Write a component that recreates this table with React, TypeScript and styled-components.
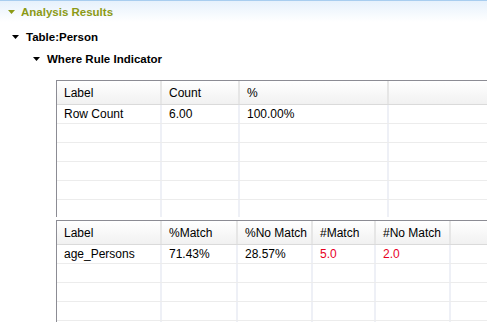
import React from "react";
import styled, { createGlobalStyle } from "styled-components";

const Global = createGlobalStyle`
  html, body { margin: 0; padding: 0; background: #fff; }
  body { font-family: "Liberation Sans", Arial, sans-serif; font-size: 12px; color: #000; overflow: hidden; }
`;

const Page = styled.div`
  width: 487px;
  height: 322px;
  overflow: hidden;
  display: flex;
  flex-direction: column;
  & > * { flex-shrink: 0; }
`;

const SectionBar = styled.div`
  height: 22px;
  border-top: 1px solid #a8cdef;
  box-sizing: border-box;
  background: linear-gradient(#e6f1fc, #ffffff);
  display: flex;
  align-items: center;
  padding-left: 8px;
  gap: 6px;
  color: #8b9a16;
  font-weight: bold;
  font-size: 11.5px;
`;

const TreeRow = styled.div<{ $indent: number; $top?: number }>`
  height: 22px;
  margin-top: ${(p) => p.$top ?? 0}px;
  display: flex;
  align-items: center;
  padding-left: ${(p) => p.$indent}px;
  gap: 7px;
  font-weight: bold;
  font-size: 11.5px;
`;

const Arrow = ({ color }: { color: string }) => (
  <svg width="7" height="4" viewBox="0 0 7 4">
    <path d="M0 0 H7 L3.5 4 Z" fill={color} />
  </svg>
);

const Tables = styled.div`
  margin-top: 10px;
  padding-left: 56px;
  display: flex;
  flex-direction: column;
  gap: 3px;
  & > * { flex-shrink: 0; }
`;

const Grid = styled.div<{ $height: number }>`
  height: ${(p) => p.$height}px;
  border-left: 1px solid #8c8c94;
  border-top: 1px solid #8c8c94;
  overflow: hidden;
  box-sizing: border-box;
`;

const HeadRow = styled.div`
  display: flex;
  height: 24px;
  box-sizing: border-box;
  border-bottom: 1px solid #dadada;
  background: linear-gradient(#ffffff 0%, #fbfbfb 30%, #f1f1f1 100%);
`;

const HeadCell = styled.div<{ $w: number; $last?: boolean }>`
  width: ${(p) => p.$w}px;
  flex: ${(p) => (p.$last ? "1" : "none")};
  box-sizing: border-box;
  padding-left: 7px;
  display: flex;
  align-items: center;
  border-right: ${(p) => (p.$last ? "none" : "2px solid #e6e6e6")};
  white-space: nowrap;
  overflow: hidden;
`;

const Row = styled.div`
  display: flex;
  height: 19px;
  box-sizing: border-box;
  border-bottom: 1px solid #ececec;
`;

const Cell = styled.div<{ $w: number; $last?: boolean; $red?: boolean }>`
  width: ${(p) => p.$w}px;
  flex: ${(p) => (p.$last ? "1" : "none")};
  box-sizing: border-box;
  padding-left: 7px;
  display: flex;
  align-items: center;
  color: ${(p) => (p.$red ? "#e8001f" : "#000")};
  border-right: ${(p) => (p.$last ? "none" : "2px solid #eef0f6")};
  white-space: nowrap;
  overflow: hidden;
`;

type Col = { label: string; w: number };

const DataGrid = ({
  cols,
  rows,
  rowCount,
  height,
  red = [],
}: {
  cols: Col[];
  rows: string[][];
  rowCount: number;
  height: number;
  red?: number[];
}) => {
  const all = Array.from({ length: rowCount }, (_, i) => rows[i] ?? cols.map(() => ""));
  return (
    <Grid $height={height}>
      <HeadRow>
        {cols.map((c) => (
          <HeadCell key={c.label} $w={c.w}>
            {c.label}
          </HeadCell>
        ))}
        <HeadCell $w={0} $last />
      </HeadRow>
      {all.map((r, i) => (
        <Row key={i}>
          {cols.map((c, j) => (
            <Cell key={c.label} $w={c.w} $red={red.includes(j)}>
              {r[j]}
            </Cell>
          ))}
          <Cell $w={0} $last />
        </Row>
      ))}
    </Grid>
  );
};

export default function App() {
  return (
    <Page>
      <Global />
      <SectionBar>
        <Arrow color="#8b9a16" />
        Analysis Results
      </SectionBar>
      <TreeRow $indent={12} $top={4}>
        <Arrow color="#000" />
        Table:Person
      </TreeRow>
      <TreeRow $indent={33}>
        <Arrow color="#000" />
        Where Rule Indicator
      </TreeRow>
      <Tables>
        <DataGrid
          height={137}
          rowCount={6}
          cols={[
            { label: "Label", w: 105 },
            { label: "Count", w: 78 },
            { label: "%", w: 149 },
          ]}
          rows={[["Row Count", "6.00", "100.00%"]]}
        />
        <DataGrid
          height={110}
          rowCount={5}
          red={[3, 4]}
          cols={[
            { label: "Label", w: 105 },
            { label: "%Match", w: 76 },
            { label: "%No Match", w: 75 },
            { label: "#Match", w: 63 },
            { label: "#No Match", w: 75 },
          ]}
          rows={[["age_Persons", "71.43%", "28.57%", "5.0", "2.0"]]}
        />
      </Tables>
    </Page>
  );
}
